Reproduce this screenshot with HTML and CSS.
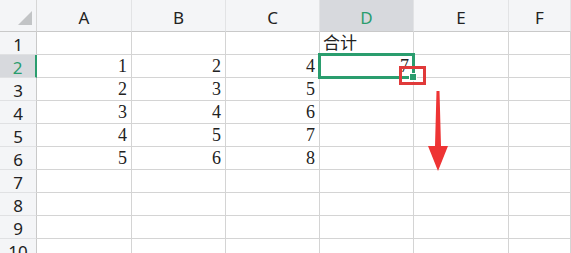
FILE: index.html
```html
<!DOCTYPE html>
<html lang="zh-CN">
  <head>
    <meta charset="UTF-8" />
    <title>合计</title>
    <link rel="stylesheet" href="styles.css">
  </head>
  <body>
    <div class="sheet">
      <div class="corner"><span class="tri"></span></div>
      <div class="colhead">A</div>
      <div class="colhead">B</div>
      <div class="colhead">C</div>
      <div class="colhead active">D</div>
      <div class="colhead">E</div>
      <div class="colhead">F</div>

      <div class="rowhead">1</div>
      <div class="cell"></div><div class="cell"></div><div class="cell"></div>
      <div class="cell text">合计</div><div class="cell"></div><div class="cell"></div>

      <div class="rowhead active">2</div>
      <div class="cell">1</div><div class="cell">2</div><div class="cell">4</div>
      <div class="cell selected">7<span class="sel-box"><span class="handle"></span></span></div>
      <div class="cell"></div><div class="cell"></div>

      <div class="rowhead">3</div>
      <div class="cell">2</div><div class="cell">3</div><div class="cell">5</div>
      <div class="cell"></div><div class="cell"></div><div class="cell"></div>

      <div class="rowhead">4</div>
      <div class="cell">3</div><div class="cell">4</div><div class="cell">6</div>
      <div class="cell"></div><div class="cell"></div><div class="cell"></div>

      <div class="rowhead">5</div>
      <div class="cell">4</div><div class="cell">5</div><div class="cell">7</div>
      <div class="cell"></div><div class="cell"></div><div class="cell"></div>

      <div class="rowhead">6</div>
      <div class="cell">5</div><div class="cell">6</div><div class="cell">8</div>
      <div class="cell"></div><div class="cell"></div><div class="cell"></div>

      <div class="rowhead">7</div>
      <div class="cell"></div><div class="cell"></div><div class="cell"></div>
      <div class="cell"></div><div class="cell"></div><div class="cell"></div>

      <div class="rowhead">8</div>
      <div class="cell"></div><div class="cell"></div><div class="cell"></div>
      <div class="cell"></div><div class="cell"></div><div class="cell"></div>

      <div class="rowhead">9</div>
      <div class="cell"></div><div class="cell"></div><div class="cell"></div>
      <div class="cell"></div><div class="cell"></div><div class="cell"></div>

      <div class="rowhead">10</div>
      <div class="cell"></div><div class="cell"></div><div class="cell"></div>
      <div class="cell"></div><div class="cell"></div><div class="cell"></div>

      <!-- annotation: red box on the fill handle and drag arrow -->
      <div class="mark"></div>
      <svg class="arrow" width="24" height="82" viewBox="0 0 24 82">
        <polygon points="10.5,0 13.5,0 15,55 22,55 12,80 2,55 9,55" fill="#ee3434" />
      </svg>
    </div>
  </body>
</html>
```

FILE: styles.css
```css
body {
  margin: 0;
  background: #fff;
  overflow: hidden;
}
.sheet {
  position: relative;
  display: grid;
  grid-template-columns: 37px 95px 94px 94px 94px 95px 1fr;
  grid-template-rows: 32px repeat(10, 23px);
  width: 571px;
  font-family: "Liberation Serif", "Noto Sans CJK SC", serif;
  font-size: 18px;
  color: #222;
}
.corner,
.colhead,
.rowhead {
  box-sizing: border-box;
  background: #f4f5f7;
  font-family: "Noto Sans", "Liberation Sans", sans-serif;
  font-size: 17px;
  color: #222;
  display: flex;
  align-items: center;
  justify-content: center;
}
.corner {
  position: relative;
  border-right: 1px solid #d6d6d6;
  border-bottom: 1px solid #c9c9c9;
}
.tri {
  position: absolute;
  right: 4px;
  bottom: 6px;
  width: 0;
  height: 0;
  border-left: 14px solid transparent;
  border-bottom: 14px solid #c2c4c6;
}
.colhead {
  padding-top: 4px;
  border-right: 1px solid #e2e3e5;
  border-bottom: 1px solid #c9c9c9;
}
.colhead.active {
  background: #d7d9dd;
  color: #2a9d6e;
}
.rowhead {
  padding-top: 2px;
  border-right: 1px solid #c9c9c9;
  border-bottom: 1px solid #e0e1e3;
}
.rowhead.active {
  background: #d7d9dd;
  color: #2a9d6e;
  border-right: 2px solid #2a9d6e;
}
.cell {
  box-sizing: border-box;
  border-right: 1px solid #d4d4d4;
  border-bottom: 1px solid #d4d4d4;
  display: flex;
  align-items: flex-end;
  justify-content: flex-end;
  padding: 0 4px;
  line-height: 21px;
}
.cell.text {
  justify-content: flex-start;
  padding-left: 3px;
  font-size: 17px;
  line-height: 20px;
}
.cell.selected {
  position: relative;
}
.sel-box {
  position: absolute;
  left: -2px;
  top: -2px;
  right: -2px;
  bottom: -2px;
  border: 3px solid #2a9d6e;
}
.handle {
  position: absolute;
  right: -5px;
  bottom: -5px;
  width: 6px;
  height: 6px;
  background: #2a9d6e;
  border: 1px solid #fff;
}
.mark {
  position: absolute;
  left: 399px;
  top: 66px;
  width: 27px;
  height: 19px;
  box-sizing: border-box;
  border: 3px solid #e03a3a;
}
.arrow {
  position: absolute;
  left: 426px;
  top: 91px;
}
```
